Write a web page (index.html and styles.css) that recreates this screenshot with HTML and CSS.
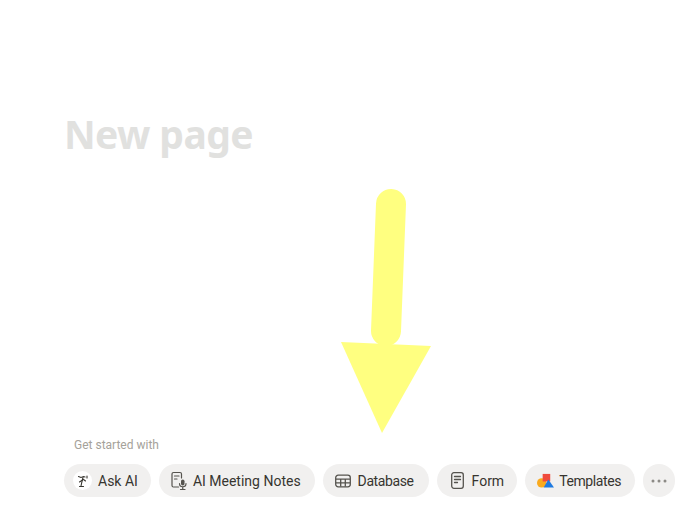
FILE: index.html
```html
<!doctype html>
<html lang="en">
  <head>
    <meta charset="utf-8">
    <title>New page</title>
    <link rel="stylesheet" href="styles.css">
  </head>
  <body>
    <main class="page">
      <h1 class="title">New page</h1>

      <div class="starter">
        <p class="starter-label">Get started with</p>
        <div class="chips">
          <button class="chip chip-ask">
            <span class="ai-face">
              <svg width="14" height="14" viewBox="0 0 14 14" fill="none" stroke="#37352f" stroke-width="1.1" stroke-linecap="round">
                <path d="M2.500 2.500 5 3.500 7.500 2.500 9 3"/>
                <path d="M7 3.500 6 7.500 5 12"/>
                <path d="M3.500 12.500H7.500"/>
                <path d="M6.500 6 3.500 8M7.500 5.500 9.500 7"/>
                <path d="M11 2V4"/>
              </svg>
            </span>
            Ask AI
          </button>
          <button class="chip">
            <svg width="17" height="20" viewBox="0 0 17 20" fill="none" stroke="#55534e" stroke-width="1.200" stroke-linecap="round">
              <path d="M7.500 16H2.500A1.500 1.500 0 0 1 1 14.500V3a1.500 1.500 0 0 1 1.500-1.500H9A1.500 1.500 0 0 1 10.500 3V7"/>
              <path d="M3.500 5H8M3.500 8H6"/>
              <rect x="10" y="8.500" width="3.500" height="6" rx="1.750" fill="#55534e" stroke="none"/>
              <path d="M8.500 12.500a3.250 3.250 0 0 0 6.500 0M11.750 16v2M9.500 18.500h4.500"/>
            </svg>
            AI Meeting Notes
          </button>
          <button class="chip chip-tight chip-database">
            <svg width="16" height="14" viewBox="0 0 16 14" fill="none" stroke="#55534e" stroke-width="1.300">
              <rect x="0.700" y="1.200" width="14.600" height="11.600" rx="2.500"/>
              <path d="M1 5.200H15M1 8.800H15M5.700 5V12.500M10.300 5V12.500"/>
            </svg>
            Database
          </button>
          <button class="chip chip-form">
            <svg width="13" height="17" viewBox="0 0 13 17" fill="none" stroke="#55534e" stroke-width="1.300" stroke-linecap="round">
              <rect x="0.700" y="0.700" width="11.600" height="15.600" rx="2.200"/>
              <path d="M3.500 4.500H9.500M3.500 7.500H9.500M3.500 10.500H6.500"/>
            </svg>
            Form
          </button>
          <button class="chip chip-tight">
            <svg width="17" height="16" viewBox="0 0 18 16">
              <circle cx="5" cy="10" r="5" fill="#f9aa1e"/>
              <rect x="6" y="0.500" width="8" height="8" fill="#ef4a3c"/>
              <path d="M12 6.500 18 15H7Z" fill="#1f7ae0"/>
            </svg>
            Templates
          </button>
          <button class="chip chip-more" aria-label="More">
            <svg width="16" height="4" viewBox="0 0 16 4" fill="#8c8a86">
              <circle cx="2" cy="2" r="1.500"/>
              <circle cx="8" cy="2" r="1.500"/>
              <circle cx="14" cy="2" r="1.500"/>
            </svg>
          </button>
        </div>
      </div>
    </main>

    <svg class="arrow" width="692" height="523" viewBox="0 0 692 523">
      <path d="M391 204 386 331" stroke="#ffff80" stroke-width="30" stroke-linecap="round"/>
      <path d="M341 342 431 346 382 433Z" fill="#ffff80"/>
    </svg>
  </body>
</html>
```

FILE: styles.css
```css
html {
  font-family: Roboto, sans-serif;
  color: #37352f;
  background-color: #fff;
}

body { margin: 0; }

.page {
  height: 523px;
  box-sizing: border-box;
  padding: 110px 17px 26px 64px;
  display: flex;
  flex-direction: column;
  justify-content: space-between;
}

.title {
  margin: 0;
  font-family: "Noto Sans", sans-serif;
  font-size: 39px;
  font-weight: 700;
  line-height: 48px;
  letter-spacing: -0.6px;
  color: #e1e1df;
}

.starter-label {
  margin: 0 0 11px 10px;
  font-size: 12px;
  line-height: 16px;
  color: #a5a29a;
}

.chips {
  display: flex;
  gap: 8px;
}

.chip {
  flex: none;
  height: 33px;
  padding: 0 14px 0 12px;
  display: flex;
  align-items: center;
  gap: 5px;
  border: 0;
  border-radius: 17px;
  background-color: #f1f0ef;
  color: #37352f;
  font: 14px Roboto, sans-serif;
  white-space: nowrap;
}

.chip-tight { letter-spacing: -0.4px; }

.chip-ask {
  padding: 0 13px 0 9px;
  gap: 6px;
}

.chip-database {
  padding-right: 15px;
  gap: 7px;
}

.chip-form {
  padding: 0 13px 0 14px;
  gap: 8px;
}

.ai-face {
  width: 19px;
  height: 19px;
  border-radius: 50%;
  background-color: #fff;
  display: flex;
  align-items: center;
  justify-content: center;
}

.chip-more {
  width: 32px;
  padding: 0;
  justify-content: center;
}

.arrow {
  position: absolute;
  top: 0;
  left: 0;
  pointer-events: none;
}
```
